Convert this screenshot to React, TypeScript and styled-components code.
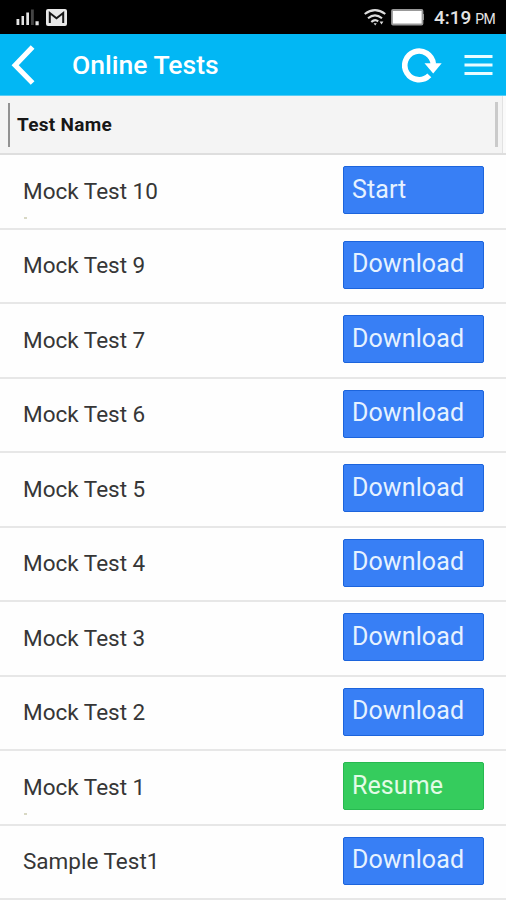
import React from "react";
import styled, { createGlobalStyle } from "styled-components";

const GlobalStyle = createGlobalStyle`
  * { box-sizing: border-box; }
  body {
    margin: 0;
    background: #fff;
    font-family: Roboto, "Liberation Sans", sans-serif;
    overflow: hidden;
  }
`;

const Screen = styled.main`
  width: 506px;
  height: 900px;
  overflow: hidden;
  background: #fefefe;
`;

const StatusBar = styled.div`
  display: flex;
  align-items: center;
  justify-content: space-between;
  height: 34px;
  padding: 0 11px 0 16px;
  background: #000;
  color: #e4e4e4;
`;

const StatusGroup = styled.div<{ $gap: number }>`
  display: flex;
  align-items: center;
  gap: ${(p) => p.$gap}px;
`;

const Clock = styled.span`
  display: flex;
  align-items: baseline;
  gap: 4px;
  margin-left: 5px;
  padding-top: 3px;
  font-size: 19px;
  line-height: 24px;
  font-weight: 500;
`;

const Meridiem = styled.span`
  font-size: 14px;
  font-weight: 400;
  letter-spacing: -0.7px;
`;

const AppBar = styled.header`
  display: flex;
  align-items: center;
  height: 62px;
  padding: 0 13px 0 11px;
  background: #02b7f4;
  border-bottom: 1px solid #57cdf5;
  color: #fff;
`;

const Title = styled.h1`
  flex: 1;
  margin: 0 0 0 37px;
  font-size: 26.5px;
  line-height: 32px;
  font-weight: 500;
`;

const IconButton = styled.button<{ $right?: number }>`
  display: flex;
  margin: 0 ${(p) => p.$right ?? 0}px 0 0;
  padding: 0;
  border: 0;
  background: none;
  color: inherit;
`;

const TableHeader = styled.div`
  display: flex;
  align-items: center;
  justify-content: space-between;
  height: 59px;
  padding: 0 8px 0 8px;
  background: #f4f4f4;
  border-bottom: 2px solid #dedede;
  box-shadow: inset -3px 0 #fafafa, inset -4px 0 #e2e2e2;
`;

const ColumnLabel = styled.div`
  display: flex;
  align-items: center;
  height: 44px;
  padding: 0 0 0 7px;
  border-left: 2px solid #929292;
  color: #171717;
  font-size: 19px;
  font-weight: 700;
  letter-spacing: 0.3px;
`;

const ColumnEdge = styled.span`
  width: 3px;
  height: 45px;
  background: #cacaca;
`;

const Row = styled.div`
  display: flex;
  align-items: flex-start;
  justify-content: space-between;
  height: 74.55px;
  padding: 11px 22px 0 23px;
  border-bottom: 2px solid #e7e7e7;
`;

const TestInfo = styled.div`
  display: flex;
  flex-direction: column;
  padding-top: 9.5px;
`;

const TestName = styled.span`
  color: #363636;
  font-size: 22.5px;
  line-height: 30px;
`;

const Mark = styled.span`
  width: 3px;
  height: 2px;
  margin: 11.5px 0 0 1px;
  background: #d8d8c4;
`;

const ActionButton = styled.button<{ $resume: boolean }>`
  width: 141px;
  height: 48px;
  padding: 0 0 1px 8px;
  border: 1px solid ${(p) => (p.$resume ? "#27b950" : "#1c64dc")};
  border-radius: 2px;
  background: ${(p) => (p.$resume ? "#35cc5d" : "#387ff5")};
  color: ${(p) => (p.$resume ? "#e2fbe6" : "#e6f2ff")};
  font: 400 25px/30px Roboto, "Liberation Sans", sans-serif;
  letter-spacing: 0.1px;
  text-align: left;
`;

const SignalIcon = () => (
  <svg width="24" height="18" viewBox="0 0 24 18">
    <g fill="#e4e4e4">
      <path d="M0.5 11h2.8v6H.5zM5.5 8h2.5v9H5.5zM10.3 4.5h2.7V17h-2.7zM19.5 13.3h3.2v4h-3.2z" />
      <path fill="#444" d="M15 1.5h2.8V17H15z" />
    </g>
  </svg>
);

const MailIcon = () => (
  <svg width="21" height="17" viewBox="0 0 21 17">
    <rect width="21" height="17" rx="2" fill="#e8e8e8" />
    <path d="M3.8 14V4l6.7 5.2L17.2 4v10" fill="none" stroke="#171717" strokeWidth="2" />
  </svg>
);

const WifiIcon = () => (
  <svg width="22" height="17" viewBox="0 0 22 17" fill="none" stroke="#dcdcdc" strokeWidth="2.1">
    <path d="M.7 5Q11-2.7 21.3 5M4 9.2Q11 3.4 18 9.2M7.3 13Q11 9.6 14.2 12.4" />
    <path d="M9.6 14.2h3.2l-1.6 2.4zM15.6 12.6h3.8l-1.9 2.8z" fill="#dcdcdc" stroke="none" />
  </svg>
);

const BatteryIcon = () => (
  <svg width="33" height="17" viewBox="0 0 33 17">
    <rect x="1" y="1" width="30.5" height="14.5" rx="1" fill="#fff" stroke="#999" strokeWidth="1.8" />
    <path d="M32.2 5v6" stroke="#999" strokeWidth="1.6" />
  </svg>
);

const BackIcon = () => (
  <svg width="24" height="42" viewBox="0 0 24 42" fill="none" stroke="#fff" strokeWidth="5.2">
    <path d="M21.6 3L4.2 21.2 21.6 39" />
  </svg>
);

const RefreshIcon = () => (
  <svg width="40" height="36" viewBox="0 0 40 36">
    <path
      d="M27.3 28.4A14.3 14.3 0 1 1 31.3 17"
      fill="none"
      stroke="#fff"
      strokeWidth="5.6"
    />
    <path d="M22.5 16.3H39.7L31.2 26.5z" fill="#fff" />
  </svg>
);

const MenuIcon = () => (
  <svg width="29" height="22" viewBox="0 0 29 22" stroke="#e9fcff" strokeWidth="3.2">
    <path d="M.5 2.5h28M.5 11h28M.5 19.5h28" />
  </svg>
);

interface Test {
  name: string;
  action: "Start" | "Download" | "Resume";
  marked?: boolean;
}

const tests: Test[] = [
  { name: "Mock Test 10", action: "Start", marked: true },
  { name: "Mock Test 9", action: "Download" },
  { name: "Mock Test 7", action: "Download" },
  { name: "Mock Test 6", action: "Download" },
  { name: "Mock Test 5", action: "Download" },
  { name: "Mock Test 4", action: "Download" },
  { name: "Mock Test 3", action: "Download" },
  { name: "Mock Test 2", action: "Download" },
  { name: "Mock Test 1", action: "Resume", marked: true },
  { name: "Sample Test1", action: "Download" },
];

export default function App() {
  return (
    <Screen>
      <GlobalStyle />
      <StatusBar>
        <StatusGroup $gap={6}>
          <SignalIcon />
          <MailIcon />
        </StatusGroup>
        <StatusGroup $gap={5}>
          <WifiIcon />
          <BatteryIcon />
          <Clock>
            4:19<Meridiem>PM</Meridiem>
          </Clock>
        </StatusGroup>
      </StatusBar>
      <AppBar>
        <IconButton aria-label="Back">
          <BackIcon />
        </IconButton>
        <Title>Online Tests</Title>
        <IconButton aria-label="Refresh" $right={22}>
          <RefreshIcon />
        </IconButton>
        <IconButton aria-label="Menu">
          <MenuIcon />
        </IconButton>
      </AppBar>
      <TableHeader>
        <ColumnLabel>Test Name</ColumnLabel>
        <ColumnEdge />
      </TableHeader>
      {tests.map((test) => (
        <Row key={test.name}>
          <TestInfo>
            <TestName>{test.name}</TestName>
            {test.marked && <Mark />}
          </TestInfo>
          <ActionButton $resume={test.action === "Resume"}>{test.action}</ActionButton>
        </Row>
      ))}
    </Screen>
  );
}
